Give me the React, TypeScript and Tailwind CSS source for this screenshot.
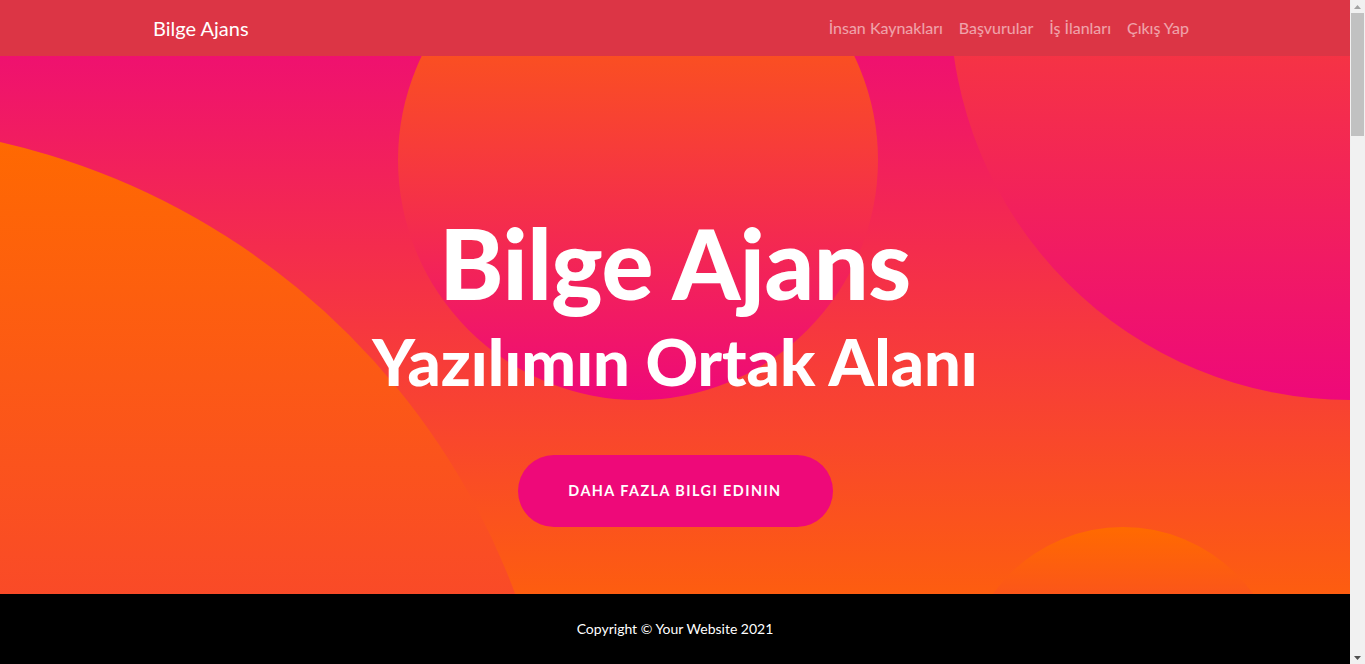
export default function App() {
  const links = ["İnsan Kaynakları", "Başvurular", "İş İlanları", "Çıkış Yap"];

  return (
    <div className="flex h-screen overflow-hidden bg-white font-['Lato',sans-serif]">
      <div className="flex min-w-0 flex-1 flex-col">
        <nav className="h-14 shrink-0 bg-[#dc3545]">
          <div className="mx-auto flex h-full w-[1044px] items-center justify-between">
            <a href="#" className="text-xl text-white">
              Bilge Ajans
            </a>
            <ul className="flex">
              {links.map((l) => (
                <li key={l}>
                  <a href="#" className="px-2 text-base text-white/55">
                    {l}
                  </a>
                </li>
              ))}
            </ul>
          </div>
        </nav>

        <header className="relative h-[538px] shrink-0 overflow-hidden bg-linear-to-t/srgb from-[#fd5d10] to-[#ef116f]">
          <div className="absolute left-[-880px] top-[68px] h-[1440px] w-[1440px] rounded-full bg-linear-to-t/srgb from-[#ee0979] to-[#ff6a00]" />
          <div className="absolute right-[-400px] top-[-456px] h-[800px] w-[800px] rounded-full bg-linear-to-t/srgb from-[#ee0979] to-[#ff6a00]" />
          <div className="absolute right-[5%] top-[471px] h-[320px] w-[320px] rounded-full bg-linear-to-t/srgb from-[#ee0979] to-[#ff6a00]" />
          <div className="absolute right-[35%] top-[-136px] h-[480px] w-[480px] rounded-full bg-linear-to-t/srgb from-[#ee0979] to-[#ff6a00]" />

          <div className="relative z-10 flex flex-col items-center pt-[158px] text-center text-white">
            <h1 className="text-[97px] font-black leading-none tracking-[-0.005em]">
              Bilge Ajans
            </h1>
            <h2 className="mt-[18px] text-[65px] font-black leading-none">
              Yazılımın Ortak Alanı
            </h2>
            <a
              href="#"
              className="mt-[61px] flex h-[72px] w-[315px] items-center justify-center rounded-full bg-[#ee0979] text-[14.4px] font-bold uppercase tracking-[0.1em] text-white"
            >
              Daha Fazla Bılgı Edının
            </a>
          </div>
        </header>

        <footer className="flex h-[70px] shrink-0 items-center justify-center bg-black">
          <p className="text-sm text-white">Copyright © Your Website 2021</p>
        </footer>
      </div>

      {/* scrollbar */}
      <div className="flex w-[15px] shrink-0 flex-col items-center bg-[#f1f1f1]">
        <div className="flex h-[13px] w-full items-center justify-center">
          <svg width="7" height="4" viewBox="0 0 7 4">
            <path d="M0 4 L3.5 0 L7 4 Z" fill="#a3a3a3" />
          </svg>
        </div>
        <div className="h-[123px] w-[13px] bg-[#c1c1c1]" />
        <div className="flex-1" />
        <div className="flex h-[13px] w-full items-center justify-center">
          <svg width="7" height="4" viewBox="0 0 7 4">
            <path d="M0 0 L7 0 L3.5 4 Z" fill="#505050" />
          </svg>
        </div>
      </div>
    </div>
  );
}
